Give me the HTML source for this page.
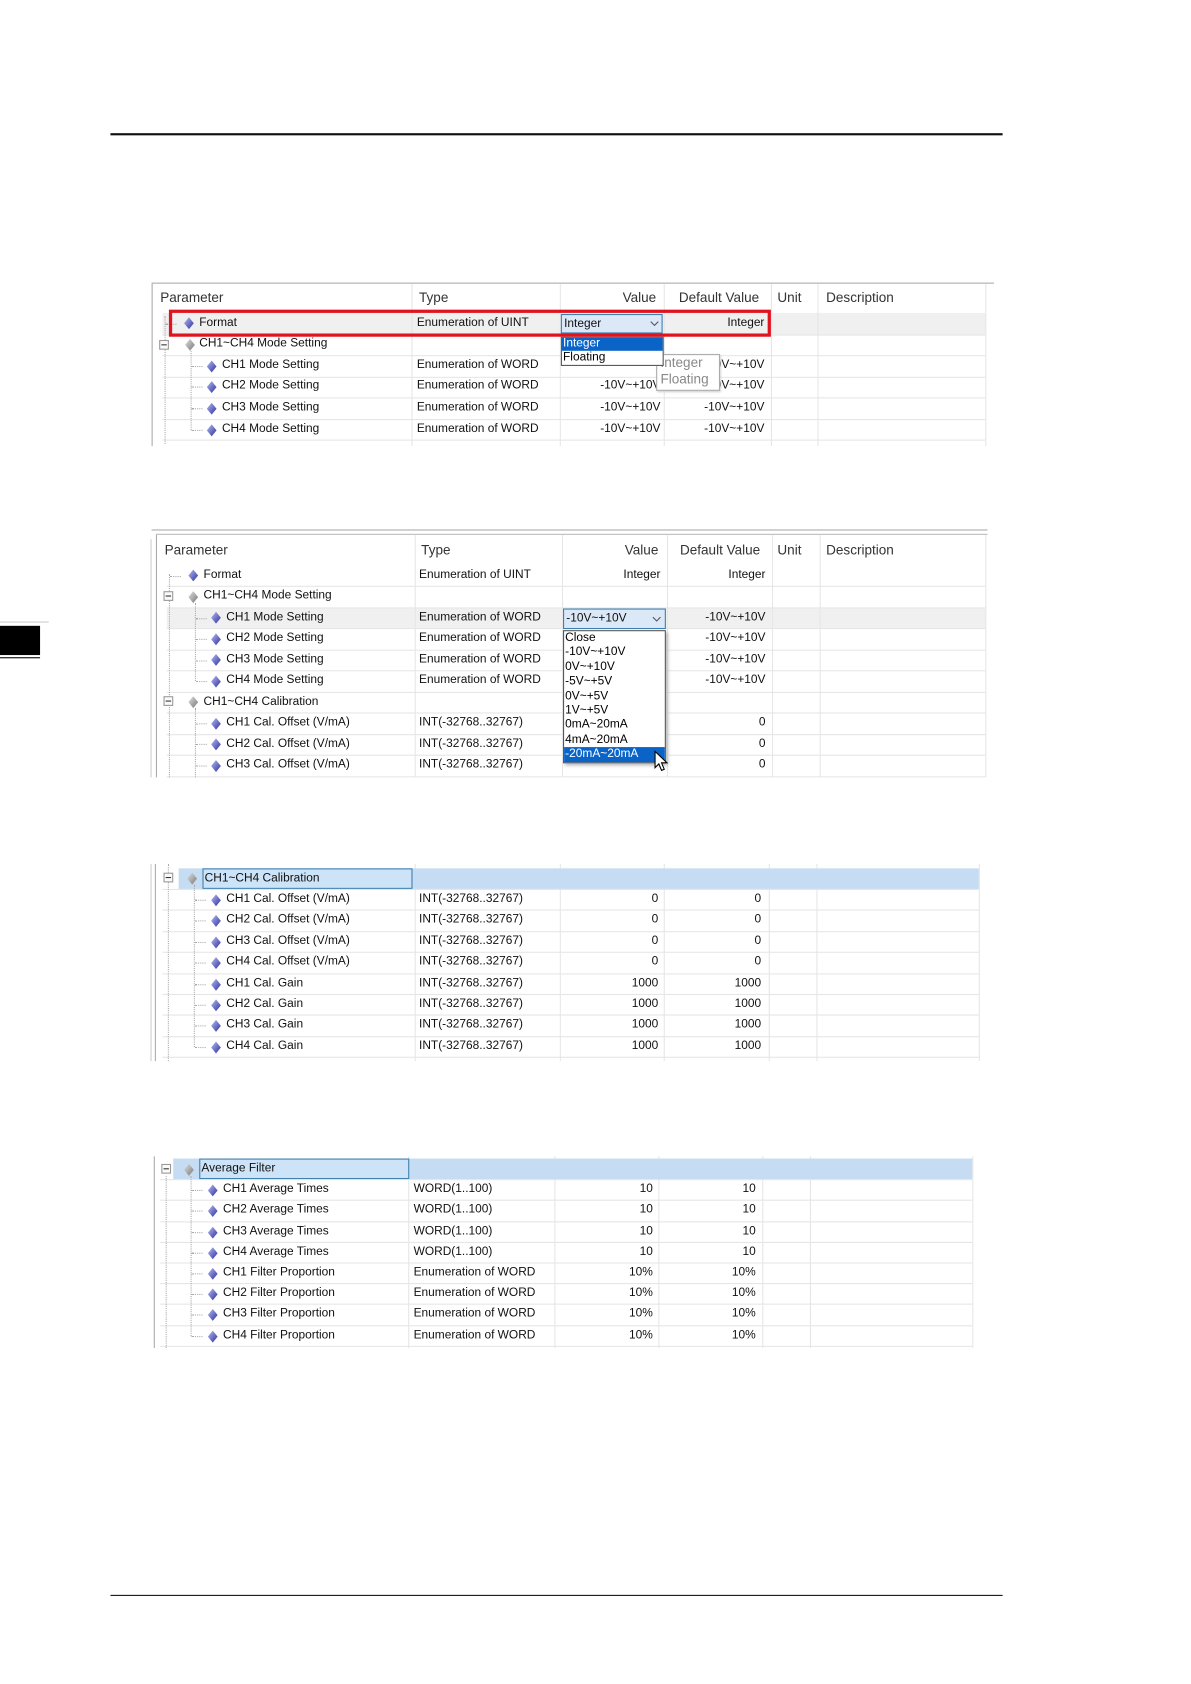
<!DOCTYPE html>
<html><head><meta charset="utf-8">
<style>
html,body{margin:0;padding:0;background:#fff;}
body{width:1191px;height:1684px;overflow:hidden;position:relative;}
#w{position:absolute;left:0;top:0;width:1100px;height:1555px;transform:scale(1.08273);transform-origin:0 0;font-family:"Liberation Sans",sans-serif;}
.a{position:absolute;}
.t{position:absolute;font-size:11px;line-height:19px;height:19px;white-space:nowrap;color:#111;}
.h{position:absolute;font-size:12.5px;line-height:19px;white-space:nowrap;color:#333;}
.rt{text-align:right;width:110px;}
.hl{position:absolute;height:1px;background:#e6e6e6;}
.vl{position:absolute;width:1px;background:#e6e6e6;}
.ic{position:absolute;width:9px;height:11px;}
.dv{position:absolute;border-left:1px dotted #aaa;width:0;}
.dh{position:absolute;border-top:1px dotted #aaa;height:0;width:10px;}
.mb{position:absolute;width:7px;height:7px;border:1px solid #999;background:#fafafa;}
.mb:after{content:"";position:absolute;left:1px;top:3px;width:5px;height:1px;background:#333;}
</style></head><body><div id="w">

<!-- page rules -->
<div class="a" style="left:102px;top:123px;width:824px;height:2px;background:#111"></div>
<div class="a" style="left:102px;top:1473px;width:824px;height:1px;background:#111"></div>
<div class="a" style="left:0;top:574px;width:45px;height:1px;background:#ccc"></div>
<div class="a" style="left:0;top:578px;width:37px;height:27px;background:#000"></div>
<div class="a" style="left:0;top:607px;width:37px;height:1px;background:#000"></div>

<svg width="0" height="0" style="position:absolute">
<defs>
<linearGradient id="gb" x1="0" y1="0" x2="1" y2="1"><stop offset="0" stop-color="#b8bdf5"/><stop offset="1" stop-color="#2a2f9a"/></linearGradient>
<linearGradient id="gg" x1="0" y1="0" x2="1" y2="1"><stop offset="0" stop-color="#e0e0e0"/><stop offset="1" stop-color="#777"/></linearGradient>
</defs></svg>

<!-- ============ TABLE 1 ============ -->
<div class="a" style="left:140px;top:261px;width:778px;height:1px;background:#aaa"></div>
<div class="a" style="left:140px;top:262px;width:1px;height:150px;background:#aaa"></div>
<div class="a" style="left:150px;top:289px;width:760px;height:20px;background:#f0f0f0"></div>
<div class="vl" style="left:380px;top:262px;height:150px"></div>
<div class="vl" style="left:517px;top:262px;height:150px"></div>
<div class="vl" style="left:613px;top:262px;height:150px"></div>
<div class="vl" style="left:712px;top:262px;height:150px"></div>
<div class="vl" style="left:755px;top:262px;height:150px"></div>
<div class="vl" style="left:910px;top:262px;height:150px"></div>
<div class="hl" style="left:150px;top:309px;width:760px"></div>
<div class="hl" style="left:150px;top:328px;width:760px"></div>
<div class="hl" style="left:150px;top:348px;width:760px"></div>
<div class="hl" style="left:150px;top:367px;width:760px"></div>
<div class="hl" style="left:150px;top:387px;width:760px"></div>
<div class="hl" style="left:150px;top:406px;width:760px"></div>
<div class="h" style="left:148px;top:266px">Parameter</div>
<div class="h" style="left:387px;top:266px">Type</div>
<div class="h" style="left:575px;top:266px">Value</div>
<div class="h" style="left:627px;top:266px">Default Value</div>
<div class="h" style="left:718px;top:266px">Unit</div>
<div class="h" style="left:763px;top:266px">Description</div>
<div class="dv" style="left:152px;top:292px;height:118px"></div>
<div class="dh" style="left:153px;top:299px"></div>
<div class="dv" style="left:176px;top:324px;height:73px"></div>
<div class="dh" style="left:177px;top:338px"></div><div class="dh" style="left:177px;top:357px"></div><div class="dh" style="left:177px;top:377px"></div><div class="dh" style="left:177px;top:397px"></div>
<div class="mb" style="left:147px;top:314px"></div>
<svg class="ic" style="left:170px;top:293px" viewBox="0 0 9 11"><polygon points="4.5,0 9,5.5 4.5,11 0,5.5" fill="url(#gb)"/></svg>
<div class="t" style="left:184px;top:289px">Format</div>
<div class="t" style="left:385px;top:289px">Enumeration of UINT</div>
<div class="t rt" style="left:596px;top:289px">Integer</div>
<svg class="ic" style="left:171px;top:313px" viewBox="0 0 9 11"><polygon points="4.5,0 9,5.5 4.5,11 0,5.5" fill="url(#gg)"/></svg>
<div class="t" style="left:184px;top:308px">CH1~CH4 Mode Setting</div>
<svg class="ic" style="left:191px;top:333px" viewBox="0 0 9 11"><polygon points="4.5,0 9,5.5 4.5,11 0,5.5" fill="url(#gb)"/></svg>
<div class="t" style="left:205px;top:328px">CH1 Mode Setting</div>
<div class="t" style="left:385px;top:328px">Enumeration of WORD</div>
<div class="t rt" style="left:596px;top:328px">-10V~+10V</div>
<svg class="ic" style="left:191px;top:352px" viewBox="0 0 9 11"><polygon points="4.5,0 9,5.5 4.5,11 0,5.5" fill="url(#gb)"/></svg>
<div class="t" style="left:205px;top:347px">CH2 Mode Setting</div>
<div class="t" style="left:385px;top:347px">Enumeration of WORD</div>
<div class="t rt" style="left:500px;top:347px">-10V~+10V</div>
<div class="t rt" style="left:596px;top:347px">-10V~+10V</div>
<svg class="ic" style="left:191px;top:372px" viewBox="0 0 9 11"><polygon points="4.5,0 9,5.5 4.5,11 0,5.5" fill="url(#gb)"/></svg>
<div class="t" style="left:205px;top:367px">CH3 Mode Setting</div>
<div class="t" style="left:385px;top:367px">Enumeration of WORD</div>
<div class="t rt" style="left:500px;top:367px">-10V~+10V</div>
<div class="t rt" style="left:596px;top:367px">-10V~+10V</div>
<svg class="ic" style="left:191px;top:392px" viewBox="0 0 9 11"><polygon points="4.5,0 9,5.5 4.5,11 0,5.5" fill="url(#gb)"/></svg>
<div class="t" style="left:205px;top:387px">CH4 Mode Setting</div>
<div class="t" style="left:385px;top:387px">Enumeration of WORD</div>
<div class="t rt" style="left:500px;top:387px">-10V~+10V</div>
<div class="t rt" style="left:596px;top:387px">-10V~+10V</div>
<!-- tooltip -->
<div class="a" style="left:606px;top:327px;width:57px;height:32px;background:#fff;border:1px solid #aaa;box-shadow:1px 1px 2px #ccc"></div>
<div class="a" style="left:610px;top:328px;font-size:12.5px;line-height:15px;color:#888">Integer<br>Floating</div>
<!-- dropdown -->
<div class="a" style="left:518px;top:290px;width:94px;height:18px;background:#dbe8f7;border:1px solid #3c7fb1;box-sizing:border-box"></div>
<div class="t" style="left:521px;top:290px">Integer</div>
<svg class="a" style="left:600px;top:296px" width="9" height="6" viewBox="0 0 9 6"><polyline points="1,1 4.5,4.5 8,1" fill="none" stroke="#555" stroke-width="1"/></svg>
<div class="a" style="left:518px;top:311px;width:95px;height:27px;background:#fff;border:1px solid #555;box-sizing:border-box"></div>
<div class="a" style="left:519px;top:312px;width:93px;height:12px;background:#0a64c8"></div>
<div class="a" style="left:520px;top:311px;font-size:11px;line-height:13px;color:#fff">Integer</div>
<div class="a" style="left:520px;top:324px;font-size:11px;line-height:13px;color:#000">Floating</div>
<!-- red box -->
<div class="a" style="left:156px;top:286px;width:556px;height:25px;border:3px solid #e0141e;box-sizing:border-box"></div>

<!-- ============ TABLE 2 ============ -->
<div class="a" style="left:140px;top:489px;width:772px;height:1px;background:#aaa"></div>
<div class="a" style="left:144px;top:493px;width:768px;height:1px;background:#bbb"></div>
<div class="a" style="left:144px;top:494px;width:1px;height:224px;background:#aaa"></div>
<div class="a" style="left:139px;top:498px;width:1px;height:220px;background:#ccc"></div>
<div class="a" style="left:154px;top:561px;width:756px;height:20px;background:#f0f0f0"></div>
<div class="vl" style="left:383px;top:494px;height:224px"></div>
<div class="vl" style="left:519px;top:494px;height:224px"></div>
<div class="vl" style="left:616px;top:494px;height:224px"></div>
<div class="vl" style="left:713px;top:494px;height:224px"></div>
<div class="vl" style="left:757px;top:494px;height:224px"></div>
<div class="vl" style="left:910px;top:494px;height:224px"></div>
<div class="hl" style="left:154px;top:541px;width:756px"></div>
<div class="hl" style="left:154px;top:561px;width:756px"></div>
<div class="hl" style="left:154px;top:580px;width:756px"></div>
<div class="hl" style="left:154px;top:600px;width:756px"></div>
<div class="hl" style="left:154px;top:619px;width:756px"></div>
<div class="hl" style="left:154px;top:639px;width:756px"></div>
<div class="hl" style="left:154px;top:658px;width:756px"></div>
<div class="hl" style="left:154px;top:678px;width:756px"></div>
<div class="hl" style="left:154px;top:697px;width:756px"></div>
<div class="hl" style="left:154px;top:717px;width:756px"></div>
<div class="h" style="left:152px;top:499px">Parameter</div>
<div class="h" style="left:389px;top:499px">Type</div>
<div class="h" style="left:577px;top:499px">Value</div>
<div class="h" style="left:628px;top:499px">Default Value</div>
<div class="h" style="left:718px;top:499px">Unit</div>
<div class="h" style="left:763px;top:499px">Description</div>
<div class="dv" style="left:156px;top:530px;height:188px"></div>
<div class="dh" style="left:157px;top:532px"></div>
<div class="dv" style="left:180px;top:557px;height:72px"></div>
<div class="dv" style="left:180px;top:654px;height:64px"></div>
<div class="dh" style="left:181px;top:571px"></div><div class="dh" style="left:181px;top:590px"></div><div class="dh" style="left:181px;top:610px"></div><div class="dh" style="left:181px;top:629px"></div><div class="dh" style="left:181px;top:668px"></div><div class="dh" style="left:181px;top:687px"></div><div class="dh" style="left:181px;top:707px"></div>
<div class="mb" style="left:151px;top:546px"></div>
<div class="mb" style="left:151px;top:643px"></div>
<svg class="ic" style="left:174px;top:526px" viewBox="0 0 9 11"><polygon points="4.5,0 9,5.5 4.5,11 0,5.5" fill="url(#gb)"/></svg>
<div class="t" style="left:188px;top:522px">Format</div>
<div class="t" style="left:387px;top:522px">Enumeration of UINT</div>
<div class="t rt" style="left:500px;top:522px">Integer</div>
<div class="t rt" style="left:597px;top:522px">Integer</div>
<svg class="ic" style="left:174px;top:546px" viewBox="0 0 9 11"><polygon points="4.5,0 9,5.5 4.5,11 0,5.5" fill="url(#gg)"/></svg>
<div class="t" style="left:188px;top:541px">CH1~CH4 Mode Setting</div>
<svg class="ic" style="left:195px;top:565px" viewBox="0 0 9 11"><polygon points="4.5,0 9,5.5 4.5,11 0,5.5" fill="url(#gb)"/></svg>
<div class="t" style="left:209px;top:561px">CH1 Mode Setting</div>
<div class="t" style="left:387px;top:561px">Enumeration of WORD</div>
<div class="t rt" style="left:597px;top:561px">-10V~+10V</div>
<svg class="ic" style="left:195px;top:585px" viewBox="0 0 9 11"><polygon points="4.5,0 9,5.5 4.5,11 0,5.5" fill="url(#gb)"/></svg>
<div class="t" style="left:209px;top:580px">CH2 Mode Setting</div>
<div class="t" style="left:387px;top:580px">Enumeration of WORD</div>
<div class="t rt" style="left:597px;top:580px">-10V~+10V</div>
<svg class="ic" style="left:195px;top:604px" viewBox="0 0 9 11"><polygon points="4.5,0 9,5.5 4.5,11 0,5.5" fill="url(#gb)"/></svg>
<div class="t" style="left:209px;top:600px">CH3 Mode Setting</div>
<div class="t" style="left:387px;top:600px">Enumeration of WORD</div>
<div class="t rt" style="left:597px;top:600px">-10V~+10V</div>
<svg class="ic" style="left:195px;top:624px" viewBox="0 0 9 11"><polygon points="4.5,0 9,5.5 4.5,11 0,5.5" fill="url(#gb)"/></svg>
<div class="t" style="left:209px;top:619px">CH4 Mode Setting</div>
<div class="t" style="left:387px;top:619px">Enumeration of WORD</div>
<div class="t rt" style="left:597px;top:619px">-10V~+10V</div>
<svg class="ic" style="left:174px;top:643px" viewBox="0 0 9 11"><polygon points="4.5,0 9,5.5 4.5,11 0,5.5" fill="url(#gg)"/></svg>
<div class="t" style="left:188px;top:639px">CH1~CH4 Calibration</div>
<svg class="ic" style="left:195px;top:663px" viewBox="0 0 9 11"><polygon points="4.5,0 9,5.5 4.5,11 0,5.5" fill="url(#gb)"/></svg>
<div class="t" style="left:209px;top:658px">CH1 Cal. Offset (V/mA)</div>
<div class="t" style="left:387px;top:658px">INT(-32768..32767)</div>
<div class="t rt" style="left:597px;top:658px">0</div>
<svg class="ic" style="left:195px;top:682px" viewBox="0 0 9 11"><polygon points="4.5,0 9,5.5 4.5,11 0,5.5" fill="url(#gb)"/></svg>
<div class="t" style="left:209px;top:678px">CH2 Cal. Offset (V/mA)</div>
<div class="t" style="left:387px;top:678px">INT(-32768..32767)</div>
<div class="t rt" style="left:597px;top:678px">0</div>
<svg class="ic" style="left:195px;top:702px" viewBox="0 0 9 11"><polygon points="4.5,0 9,5.5 4.5,11 0,5.5" fill="url(#gb)"/></svg>
<div class="t" style="left:209px;top:697px">CH3 Cal. Offset (V/mA)</div>
<div class="t" style="left:387px;top:697px">INT(-32768..32767)</div>
<div class="t rt" style="left:597px;top:697px">0</div>
<!-- dropdown 2 -->
<div class="a" style="left:520px;top:562px;width:95px;height:19px;background:#dbe8f7;border:1px solid #3c7fb1;box-sizing:border-box"></div>
<div class="t" style="left:523px;top:562px">-10V~+10V</div>
<svg class="a" style="left:602px;top:569px" width="9" height="6" viewBox="0 0 9 6"><polyline points="1,1 4.5,4.5 8,1" fill="none" stroke="#555" stroke-width="1"/></svg>
<div class="a" style="left:520px;top:582px;width:95px;height:123px;background:#fff;border:1px solid #555;box-sizing:border-box;box-shadow:2px 2px 3px #bbb"></div>
<div class="a" style="left:521px;top:690px;width:93px;height:14px;background:#0a64c8"></div>
<div class="a" style="left:522px;top:583px;font-size:11px;line-height:13.4px;color:#000">Close<br>-10V~+10V<br>0V~+10V<br>-5V~+5V<br>0V~+5V<br>1V~+5V<br>0mA~20mA<br>4mA~20mA<br><span style="color:#fff">-20mA~20mA</span></div>
<svg class="a" style="left:604px;top:693px" width="13" height="20" viewBox="0 0 13 20"><path d="M1,1 L1,16 L4.5,12.5 L7,18.5 L9.5,17.5 L7,11.5 L12,11.5 Z" fill="#fff" stroke="#000" stroke-width="1"/></svg>

<!-- ============ TABLE 3 ============ -->
<div class="a" style="left:143px;top:798px;width:1px;height:182px;background:#aaa"></div>
<div class="a" style="left:139px;top:798px;width:1px;height:182px;background:#ccc"></div>
<div class="vl" style="left:383px;top:798px;height:182px"></div>
<div class="vl" style="left:517px;top:798px;height:182px"></div>
<div class="vl" style="left:613px;top:798px;height:182px"></div>
<div class="vl" style="left:710px;top:798px;height:182px"></div>
<div class="vl" style="left:754px;top:798px;height:182px"></div>
<div class="vl" style="left:904px;top:798px;height:182px"></div>
<div class="a" style="left:165px;top:802px;width:739px;height:19px;background:#c5dcf2"></div>
<div class="a" style="left:187px;top:802px;width:194px;height:19px;border:1px solid #3c7fb1;box-sizing:border-box;background:#cde3f7"></div>
<div class="hl" style="left:150px;top:821px;width:754px"></div>
<div class="hl" style="left:150px;top:840px;width:754px"></div>
<div class="hl" style="left:150px;top:860px;width:754px"></div>
<div class="hl" style="left:150px;top:879px;width:754px"></div>
<div class="hl" style="left:150px;top:899px;width:754px"></div>
<div class="hl" style="left:150px;top:918px;width:754px"></div>
<div class="hl" style="left:150px;top:937px;width:754px"></div>
<div class="hl" style="left:150px;top:957px;width:754px"></div>
<div class="hl" style="left:150px;top:976px;width:754px"></div>
<div class="dv" style="left:155px;top:798px;height:182px"></div>
<div class="dv" style="left:179px;top:817px;height:150px"></div>
<div class="mb" style="left:151px;top:806px"></div>
<svg class="ic" style="left:173px;top:806px" viewBox="0 0 9 11"><polygon points="4.5,0 9,5.5 4.5,11 0,5.5" fill="url(#gg)"/></svg>
<div class="t" style="left:189px;top:802px">CH1~CH4 Calibration</div>
<div class="dh" style="left:180px;top:831px"></div><div class="dh" style="left:180px;top:850px"></div><div class="dh" style="left:180px;top:870px"></div><div class="dh" style="left:180px;top:889px"></div><div class="dh" style="left:180px;top:909px"></div><div class="dh" style="left:180px;top:928px"></div><div class="dh" style="left:180px;top:947px"></div><div class="dh" style="left:180px;top:967px"></div>
<svg class="ic" style="left:195px;top:826px" viewBox="0 0 9 11"><polygon points="4.5,0 9,5.5 4.5,11 0,5.5" fill="url(#gb)"/></svg>
<div class="t" style="left:209px;top:821px">CH1 Cal. Offset (V/mA)</div><div class="t" style="left:387px;top:821px">INT(-32768..32767)</div><div class="t rt" style="left:498px;top:821px">0</div><div class="t rt" style="left:593px;top:821px">0</div>
<svg class="ic" style="left:195px;top:845px" viewBox="0 0 9 11"><polygon points="4.5,0 9,5.5 4.5,11 0,5.5" fill="url(#gb)"/></svg>
<div class="t" style="left:209px;top:840px">CH2 Cal. Offset (V/mA)</div><div class="t" style="left:387px;top:840px">INT(-32768..32767)</div><div class="t rt" style="left:498px;top:840px">0</div><div class="t rt" style="left:593px;top:840px">0</div>
<svg class="ic" style="left:195px;top:865px" viewBox="0 0 9 11"><polygon points="4.5,0 9,5.5 4.5,11 0,5.5" fill="url(#gb)"/></svg>
<div class="t" style="left:209px;top:860px">CH3 Cal. Offset (V/mA)</div><div class="t" style="left:387px;top:860px">INT(-32768..32767)</div><div class="t rt" style="left:498px;top:860px">0</div><div class="t rt" style="left:593px;top:860px">0</div>
<svg class="ic" style="left:195px;top:884px" viewBox="0 0 9 11"><polygon points="4.5,0 9,5.5 4.5,11 0,5.5" fill="url(#gb)"/></svg>
<div class="t" style="left:209px;top:879px">CH4 Cal. Offset (V/mA)</div><div class="t" style="left:387px;top:879px">INT(-32768..32767)</div><div class="t rt" style="left:498px;top:879px">0</div><div class="t rt" style="left:593px;top:879px">0</div>
<svg class="ic" style="left:195px;top:904px" viewBox="0 0 9 11"><polygon points="4.5,0 9,5.5 4.5,11 0,5.5" fill="url(#gb)"/></svg>
<div class="t" style="left:209px;top:899px">CH1 Cal. Gain</div><div class="t" style="left:387px;top:899px">INT(-32768..32767)</div><div class="t rt" style="left:498px;top:899px">1000</div><div class="t rt" style="left:593px;top:899px">1000</div>
<svg class="ic" style="left:195px;top:923px" viewBox="0 0 9 11"><polygon points="4.5,0 9,5.5 4.5,11 0,5.5" fill="url(#gb)"/></svg>
<div class="t" style="left:209px;top:918px">CH2 Cal. Gain</div><div class="t" style="left:387px;top:918px">INT(-32768..32767)</div><div class="t rt" style="left:498px;top:918px">1000</div><div class="t rt" style="left:593px;top:918px">1000</div>
<svg class="ic" style="left:195px;top:942px" viewBox="0 0 9 11"><polygon points="4.5,0 9,5.5 4.5,11 0,5.5" fill="url(#gb)"/></svg>
<div class="t" style="left:209px;top:937px">CH3 Cal. Gain</div><div class="t" style="left:387px;top:937px">INT(-32768..32767)</div><div class="t rt" style="left:498px;top:937px">1000</div><div class="t rt" style="left:593px;top:937px">1000</div>
<svg class="ic" style="left:195px;top:962px" viewBox="0 0 9 11"><polygon points="4.5,0 9,5.5 4.5,11 0,5.5" fill="url(#gb)"/></svg>
<div class="t" style="left:209px;top:957px">CH4 Cal. Gain</div><div class="t" style="left:387px;top:957px">INT(-32768..32767)</div><div class="t rt" style="left:498px;top:957px">1000</div><div class="t rt" style="left:593px;top:957px">1000</div>

<!-- ============ TABLE 4 ============ -->
<div class="a" style="left:142px;top:1068px;width:1px;height:177px;background:#aaa"></div>
<div class="vl" style="left:377px;top:1068px;height:177px"></div>
<div class="vl" style="left:512px;top:1068px;height:177px"></div>
<div class="vl" style="left:608px;top:1068px;height:177px"></div>
<div class="vl" style="left:704px;top:1068px;height:177px"></div>
<div class="vl" style="left:748px;top:1068px;height:177px"></div>
<div class="vl" style="left:898px;top:1068px;height:177px"></div>
<div class="a" style="left:160px;top:1070px;width:738px;height:19px;background:#c5dcf2"></div>
<div class="a" style="left:184px;top:1070px;width:194px;height:19px;border:1px solid #3c7fb1;box-sizing:border-box;background:#cde3f7"></div>
<div class="hl" style="left:148px;top:1089px;width:750px"></div>
<div class="hl" style="left:148px;top:1108px;width:750px"></div>
<div class="hl" style="left:148px;top:1128px;width:750px"></div>
<div class="hl" style="left:148px;top:1147px;width:750px"></div>
<div class="hl" style="left:148px;top:1166px;width:750px"></div>
<div class="hl" style="left:148px;top:1185px;width:750px"></div>
<div class="hl" style="left:148px;top:1204px;width:750px"></div>
<div class="hl" style="left:148px;top:1224px;width:750px"></div>
<div class="hl" style="left:148px;top:1243px;width:750px"></div>
<div class="dv" style="left:153px;top:1086px;height:159px"></div>
<div class="dv" style="left:176px;top:1086px;height:148px"></div>
<div class="mb" style="left:149px;top:1075px"></div>
<svg class="ic" style="left:170px;top:1075px" viewBox="0 0 9 11"><polygon points="4.5,0 9,5.5 4.5,11 0,5.5" fill="url(#gg)"/></svg>
<div class="t" style="left:186px;top:1070px">Average Filter</div>
<div class="dh" style="left:177px;top:1099px"></div><div class="dh" style="left:177px;top:1118px"></div><div class="dh" style="left:177px;top:1138px"></div><div class="dh" style="left:177px;top:1157px"></div><div class="dh" style="left:177px;top:1176px"></div><div class="dh" style="left:177px;top:1195px"></div><div class="dh" style="left:177px;top:1214px"></div><div class="dh" style="left:177px;top:1234px"></div>
<svg class="ic" style="left:192px;top:1094px" viewBox="0 0 9 11"><polygon points="4.5,0 9,5.5 4.5,11 0,5.5" fill="url(#gb)"/></svg>
<div class="t" style="left:206px;top:1089px">CH1 Average Times</div><div class="t" style="left:382px;top:1089px">WORD(1..100)</div><div class="t rt" style="left:493px;top:1089px">10</div><div class="t rt" style="left:588px;top:1089px">10</div>
<svg class="ic" style="left:192px;top:1113px" viewBox="0 0 9 11"><polygon points="4.5,0 9,5.5 4.5,11 0,5.5" fill="url(#gb)"/></svg>
<div class="t" style="left:206px;top:1108px">CH2 Average Times</div><div class="t" style="left:382px;top:1108px">WORD(1..100)</div><div class="t rt" style="left:493px;top:1108px">10</div><div class="t rt" style="left:588px;top:1108px">10</div>
<svg class="ic" style="left:192px;top:1133px" viewBox="0 0 9 11"><polygon points="4.5,0 9,5.5 4.5,11 0,5.5" fill="url(#gb)"/></svg>
<div class="t" style="left:206px;top:1128px">CH3 Average Times</div><div class="t" style="left:382px;top:1128px">WORD(1..100)</div><div class="t rt" style="left:493px;top:1128px">10</div><div class="t rt" style="left:588px;top:1128px">10</div>
<svg class="ic" style="left:192px;top:1152px" viewBox="0 0 9 11"><polygon points="4.5,0 9,5.5 4.5,11 0,5.5" fill="url(#gb)"/></svg>
<div class="t" style="left:206px;top:1147px">CH4 Average Times</div><div class="t" style="left:382px;top:1147px">WORD(1..100)</div><div class="t rt" style="left:493px;top:1147px">10</div><div class="t rt" style="left:588px;top:1147px">10</div>
<svg class="ic" style="left:192px;top:1171px" viewBox="0 0 9 11"><polygon points="4.5,0 9,5.5 4.5,11 0,5.5" fill="url(#gb)"/></svg>
<div class="t" style="left:206px;top:1166px">CH1 Filter Proportion</div><div class="t" style="left:382px;top:1166px">Enumeration of WORD</div><div class="t rt" style="left:493px;top:1166px">10%</div><div class="t rt" style="left:588px;top:1166px">10%</div>
<svg class="ic" style="left:192px;top:1190px" viewBox="0 0 9 11"><polygon points="4.5,0 9,5.5 4.5,11 0,5.5" fill="url(#gb)"/></svg>
<div class="t" style="left:206px;top:1185px">CH2 Filter Proportion</div><div class="t" style="left:382px;top:1185px">Enumeration of WORD</div><div class="t rt" style="left:493px;top:1185px">10%</div><div class="t rt" style="left:588px;top:1185px">10%</div>
<svg class="ic" style="left:192px;top:1209px" viewBox="0 0 9 11"><polygon points="4.5,0 9,5.5 4.5,11 0,5.5" fill="url(#gb)"/></svg>
<div class="t" style="left:206px;top:1204px">CH3 Filter Proportion</div><div class="t" style="left:382px;top:1204px">Enumeration of WORD</div><div class="t rt" style="left:493px;top:1204px">10%</div><div class="t rt" style="left:588px;top:1204px">10%</div>
<svg class="ic" style="left:192px;top:1229px" viewBox="0 0 9 11"><polygon points="4.5,0 9,5.5 4.5,11 0,5.5" fill="url(#gb)"/></svg>
<div class="t" style="left:206px;top:1224px">CH4 Filter Proportion</div><div class="t" style="left:382px;top:1224px">Enumeration of WORD</div><div class="t rt" style="left:493px;top:1224px">10%</div><div class="t rt" style="left:588px;top:1224px">10%</div>

</div></body></html>
